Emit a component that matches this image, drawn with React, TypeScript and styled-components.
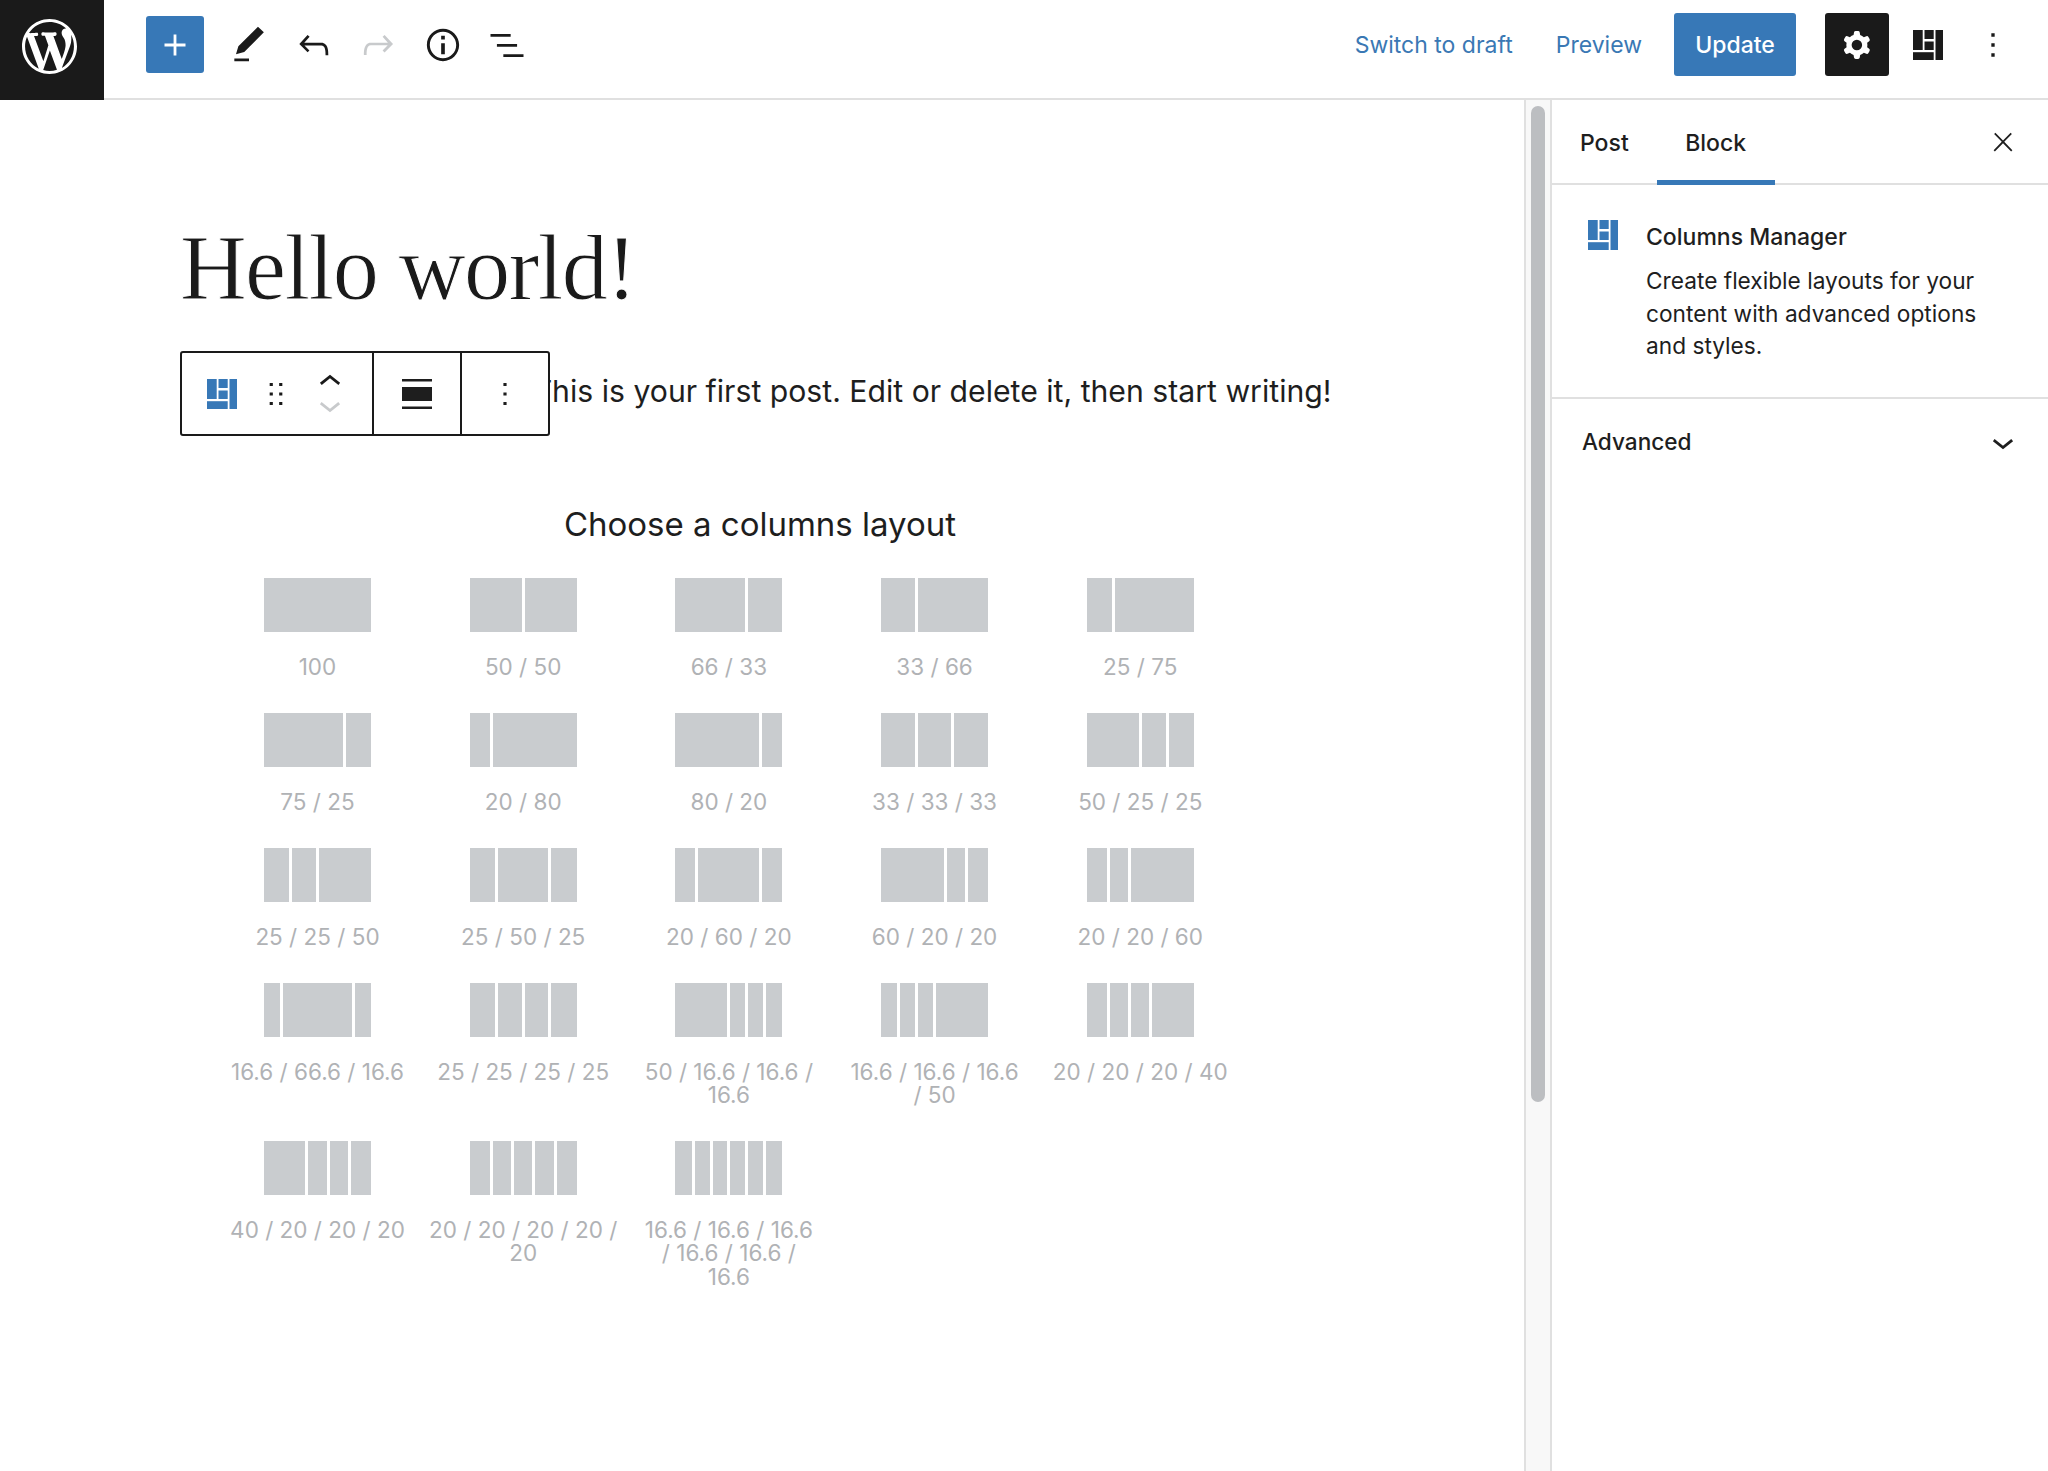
import React from "react";
import styled, { createGlobalStyle } from "styled-components";

const Global = createGlobalStyle`
  html, body { margin: 0; padding: 0; background: #fff; }
  body { font-family: Inter, "Noto Sans", "Liberation Sans", sans-serif; color: #1e1e1e; overflow: hidden; }
  * { box-sizing: border-box; }
`;

const Page = styled.div`
  width: 2048px;
  height: 1471px;
  display: flex;
  flex-direction: column;
  background: #fff;
  overflow: hidden;
`;

const Header = styled.header`
  flex: 0 0 100px;
  display: flex;
  align-items: flex-start;
  border-bottom: 2px solid #e0e0e0;
`;

const LogoBox = styled.div`
  width: 104px;
  height: 100px;
  margin-bottom: -2px;
  background: #1a1a1a;
  color: #fff;
  display: flex;
  align-items: center;
  justify-content: center;
  padding: 0 5px 7px 0;
`;

const ToolGroup = styled.div`
  display: flex;
  align-items: center;
  height: 89px;
  margin-left: 42px;
`;

const Inserter = styled.div`
  width: 58px;
  height: 57px;
  border-radius: 3px;
  background: #3778b7;
  color: #fff;
  display: flex;
  align-items: center;
  justify-content: center;
  margin-right: 13px;
`;

const ToolIcon = styled.div<{ $muted?: boolean }>`
  width: 64.5px;
  height: 57px;
  display: flex;
  align-items: center;
  justify-content: center;
  color: ${(p) => (p.$muted ? "#c8cacc" : "#1a1a1a")};
`;

const HeaderRight = styled.div`
  margin-left: auto;
  height: 89px;
  display: flex;
  align-items: center;
  padding-right: 23px;
`;

const LinkText = styled.span<{ $gap: number }>`
  font-size: 23px;
  color: #3a78b4;
  margin-right: ${(p) => p.$gap}px;
`;

const UpdateButton = styled.div`
  width: 122px;
  height: 63px;
  border-radius: 3px;
  background: #3778b7;
  color: #fff;
  font-size: 23px;
  font-weight: 500;
  display: flex;
  align-items: center;
  justify-content: center;
  margin-right: 29px;
`;

const SettingsButton = styled.div`
  width: 64px;
  height: 63px;
  border-radius: 3px;
  background: #1a1a1a;
  color: #fff;
  display: flex;
  align-items: center;
  justify-content: center;
  margin-right: 7px;
`;

const Body = styled.div`
  flex: 1;
  display: flex;
  min-height: 0;
`;

const Canvas = styled.main`
  flex: 0 0 1524px;
  padding: 116px 0 0 180px;
`;

const Title = styled.h1`
  margin: 0;
  font-family: "Liberation Serif", serif;
  font-weight: 400;
  font-size: 92.4px;
  line-height: 104px;
  color: #1a1a1a;
  letter-spacing: -1.6px;
  -webkit-text-stroke: 1px #fff;
`;

const ParagraphRow = styled.div`
  position: relative;
  margin-top: 31px;
  width: 1160px;
  height: 85px;
`;

const Paragraph = styled.p`
  margin: 0 0 0 3px;
  font-size: 30.2px;
  line-height: 80px;
  white-space: nowrap;
  color: #1e1e1e;
`;

const BlockToolbar = styled.div`
  position: absolute;
  left: 0;
  top: 0;
  width: 370px;
  height: 85px;
  display: flex;
  background: #fff;
  border: 2px solid #1a1a1a;
  border-radius: 3px;
`;

const ToolbarGroup = styled.div<{ $width: number; $inset?: number }>`
  width: ${(p) => p.$width}px;
  padding-left: ${(p) => p.$inset ?? 0}px;
  display: flex;
  align-items: center;
  justify-content: center;
  border-right: 2px solid #1a1a1a;
  &:last-child { border-right: none; }
`;

const BlockIcon = styled.div`
  color: #3778b7;
  display: flex;
  margin-right: 20.6px;
`;

const DragIcon = styled.div`
  color: #1a1a1a;
  display: flex;
  margin-right: 12.8px;
`;

const MoverStack = styled.div`
  display: flex;
  flex-direction: column;
  justify-content: center;
`;

const MoverIcon = styled.div<{ $muted?: boolean }>`
  height: 23px;
  color: ${(p) => (p.$muted ? "#c8cacc" : "#1a1a1a")};
  display: flex;
  align-items: center;
  justify-content: center;
`;

const Placeholder = styled.section`
  width: 1160px;
  margin-top: 66px;
`;

const PlaceholderTitle = styled.div`
  text-align: center;
  font-size: 33px;
  line-height: 44px;
  color: #1e1e1e;
`;

const LayoutGrid = styled.div`
  display: grid;
  grid-template-columns: repeat(5, 186px);
  column-gap: 19.7px;
  row-gap: 34.8px;
  margin: 32px 0 0 44.5px;
`;

const LayoutCell = styled.div`
  display: flex;
  flex-direction: column;
  align-items: center;
`;

const Preview = styled.div`
  width: 107px;
  height: 54px;
  display: flex;
  margin-bottom: 23px;
`;

const PreviewColumn = styled.div<{ $w: number }>`
  flex: 0 0 ${(p) => p.$w}%;
  padding: 0 1.5px;
  background: #c9cccf;
  background-clip: content-box;
  &:first-child { padding-left: 0; }
  &:last-child { padding-right: 0; }
`;

const LayoutLabel = styled.div`
  font-size: 22.5px;
  line-height: 23.2px;
  color: #b0b2b5;
  text-align: center;
  white-space: pre;
`;

const ScrollTrack = styled.div`
  flex: 0 0 28px;
  display: flex;
  justify-content: center;
  background: #f8f8f8;
  border-left: 2px solid #e0e0e0;
  border-right: 2px solid #e0e0e0;
  padding-top: 6px;
`;

const ScrollThumb = styled.div`
  width: 14px;
  height: 996px;
  border-radius: 7px;
  background: #bcbec1;
`;

const Sidebar = styled.aside`
  flex: 1;
  display: flex;
  flex-direction: column;
`;

const Tabs = styled.div`
  height: 85px;
  display: flex;
  align-items: stretch;
  border-bottom: 2px solid #e0e0e0;
  padding-left: 28px;
  padding-right: 30px;
`;

const Tab = styled.div<{ $active?: boolean }>`
  font-size: 23px;
  font-weight: 500;
  color: #1e1e1e;
  display: flex;
  align-items: center;
  padding: ${(p) => (p.$active ? "5px 28.5px 0" : "0 28px 0 0")};
  height: 85px;
  border-bottom: ${(p) => (p.$active ? "5px solid #3778b7" : "none")};
`;

const CloseWrap = styled.div`
  margin-left: auto;
  display: flex;
  align-items: center;
  height: 83px;
`;

const Card = styled.div`
  display: flex;
  height: 214px;
  padding: 36px 44px 0 36px;
  border-bottom: 2px solid #e0e0e0;
`;

const CardIcon = styled.div`
  width: 58px;
  flex: none;
  color: #3778b7;
  margin-top: -1px;
`;

const CardTitle = styled.div`
  font-size: 23px;
  line-height: 32px;
  font-weight: 500;
  color: #1e1e1e;
`;

const CardText = styled.div`
  margin-top: 12px;
  font-size: 22.7px;
  line-height: 32.6px;
  color: #1e1e1e;
`;

const PanelRow = styled.div`
  display: flex;
  align-items: center;
  justify-content: space-between;
  height: 85px;
  padding: 0 23px 0 30px;
  font-size: 22.6px;
  font-weight: 500;
`;

const Icon = ({ d, size = 44, evenodd }: { d: string; size?: number; evenodd?: boolean }) => (
  <svg width={size} height={size} viewBox="0 0 24 24" fill="currentColor">
    <path d={d} fillRule={evenodd ? "evenodd" : undefined} clipRule={evenodd ? "evenodd" : undefined} />
  </svg>
);

const WpLogo = () => (
  <svg width="55" height="55" viewBox="0 0 20 20" fill="currentColor">
    <path d="M20 10c0-5.51-4.49-10-10-10C4.48 0 0 4.49 0 10c0 5.52 4.48 10 10 10 5.51 0 10-4.48 10-10zM7.78 15.37L4.37 6.22c.55-.02 1.17-.08 1.17-.08.5-.06.44-1.13-.06-1.11 0 0-1.45.11-2.37.11-.18 0-.37 0-.58-.01C4.12 2.69 6.87 1.11 10 1.11c2.33 0 4.45.87 6.05 2.34-.68-.11-1.65.39-1.65 1.58 0 .74.45 1.36.9 2.1.35.61.55 1.36.55 2.46 0 1.49-1.4 5-1.4 5l-3.03-8.37c.54-.02.82-.17.82-.17.5-.05.44-1.25-.06-1.22 0 0-1.44.12-2.38.12-.87 0-2.33-.12-2.33-.12-.5-.03-.56 1.2-.06 1.22l.92.08 1.26 3.41zM17.41 10c.24-.64.74-1.87.43-4.25.7 1.29 1.05 2.71 1.05 4.25 0 3.29-1.73 6.24-4.4 7.78.97-2.59 1.94-5.2 2.92-7.78zM6.1 18.09C3.12 16.65 1.11 13.53 1.11 10c0-1.3.23-2.48.72-3.59C3.25 10.3 4.67 14.2 6.1 18.09zm4.03-6.63l2.58 6.98c-.86.29-1.76.45-2.71.45-.79 0-1.57-.11-2.29-.33.81-2.38 1.62-4.74 2.42-7.1z" />
  </svg>
);

const P = {
  plus: "M18 11.2h-5.2V6h-1.6v5.2H6v1.6h5.2V18h1.6v-5.2H18z",
  pen: "M20.1 5.1L16.9 2 6.2 12.7l-1.3 4.4 4.5-1.3L20.1 5.1zM4 20.8h8v-1.5H4v1.5z",
  undo: "M18.3 11.7c-.6-.6-1.4-.9-2.3-.9H6.7l2.9-3.3-1.1-1-4.5 5L8.5 16l1-1-2.7-2.7H16c.5 0 .9.2 1.3.5 1 1 1 3.4 1 4.5v.3h1.5v-.2c0-1.5 0-4.3-1.5-5.7z",
  redo: "M15.6 6.5l-1.1 1 2.9 3.3H8c-.9 0-1.7.3-2.3.9-1.4 1.5-1.4 4.2-1.4 5.6v.2h1.5v-.3c0-1.1 0-3.5 1-4.5.3-.3.7-.5 1.3-.5h9.2L14.5 15l1.1 1.1 4.6-4.6-4.6-5z",
  info: "M12 3.2c-4.8 0-8.8 3.9-8.8 8.8 0 4.8 3.9 8.8 8.8 8.8 4.8 0 8.8-3.9 8.8-8.8 0-4.8-4-8.8-8.8-8.8zm0 16c-4 0-7.2-3.3-7.2-7.2C4.8 8 8 4.8 12 4.8s7.2 3.3 7.2 7.2c0 4-3.2 7.2-7.2 7.2zM11 17h2v-6h-2v6zm0-8h2V7h-2v2z",
  list: "M3 6h11v1.5H3V6zm3.5 5.5h11V13h-11v-1.5zM21 17H10v1.5h11V17z",
  cog: "M10.289 4.836A1 1 0 0111.275 4h1.306a1 1 0 01.987.836l.244 1.466c.787.26 1.503.679 2.108 1.218l1.393-.522a1 1 0 011.216.437l.653 1.13a1 1 0 01-.23 1.273l-1.148.944a6.025 6.025 0 010 2.435l1.149.946a1 1 0 01.23 1.272l-.653 1.13a1 1 0 01-1.216.437l-1.394-.522c-.605.54-1.32.958-2.108 1.218l-.244 1.466a1 1 0 01-.987.836h-1.306a1 1 0 01-.986-.836l-.244-1.466a5.995 5.995 0 01-2.108-1.218l-1.394.522a1 1 0 01-1.217-.436l-.653-1.131a1 1 0 01.23-1.272l1.149-.946a6.026 6.026 0 010-2.435l-1.148-.944a1 1 0 01-.23-1.272l.653-1.131a1 1 0 011.217-.437l1.393.522a5.994 5.994 0 012.108-1.218l.244-1.466zM14.929 12a3 3 0 11-6 0 3 3 0 016 0z",
  more: "M13 19h-2v-2h2v2zm0-6h-2v-2h2v2zm0-6h-2V5h2v2z",
  close: "M13 11.8l6.1-6.3-1-1-6.1 6.2-6.1-6.2-1 1 6.1 6.3-6.5 6.7 1 1 6.5-6.6 6.5 6.6 1-1z",
  down: "M17.5 11.6L12 16l-5.5-4.4.9-1.2L12 14l4.5-3.6 1 1.2z",
  up: "M6.5 12.4L12 8l5.5 4.4-.9 1.2L12 10l-4.5 3.6-1-1.2z",
  drag: "M8 7h2V5H8v2zm0 6h2v-2H8v2zm0 6h2v-2H8v2zm6-14v2h2V5h-2zm0 8h2v-2h-2v2zm0 6h2v-2h-2v2z",
};

const ColumnsIcon = ({ size = 30 }: { size?: number }) => (
  <svg width={size} height={size} viewBox="0 0 30 30" fill="currentColor">
    <rect x="0" y="0" width="9.7" height="20" />
    <rect x="11.5" y="0" width="9.2" height="9" />
    <rect x="11.5" y="11.5" width="9.2" height="8.5" />
    <rect x="0" y="22.2" width="20.7" height="7.8" />
    <rect x="22.5" y="0" width="7.5" height="30" />
  </svg>
);

const AlignFull = () => (
  <svg width="30" height="30" viewBox="0 0 30 30" fill="currentColor">
    <rect x="0" y="0" width="30" height="2.5" />
    <rect x="0" y="8" width="30" height="14" />
    <rect x="0" y="27.5" width="30" height="2.5" />
  </svg>
);

const LAYOUTS: { cols: number[]; label: string }[] = [
  { cols: [100], label: "100" },
  { cols: [50, 50], label: "50 / 50" },
  { cols: [66, 33], label: "66 / 33" },
  { cols: [33, 66], label: "33 / 66" },
  { cols: [25, 75], label: "25 / 75" },
  { cols: [75, 25], label: "75 / 25" },
  { cols: [20, 80], label: "20 / 80" },
  { cols: [80, 20], label: "80 / 20" },
  { cols: [33, 33, 33], label: "33 / 33 / 33" },
  { cols: [50, 25, 25], label: "50 / 25 / 25" },
  { cols: [25, 25, 50], label: "25 / 25 / 50" },
  { cols: [25, 50, 25], label: "25 / 50 / 25" },
  { cols: [20, 60, 20], label: "20 / 60 / 20" },
  { cols: [60, 20, 20], label: "60 / 20 / 20" },
  { cols: [20, 20, 60], label: "20 / 20 / 60" },
  { cols: [16.6, 66.6, 16.6], label: "16.6 / 66.6 / 16.6" },
  { cols: [25, 25, 25, 25], label: "25 / 25 / 25 / 25" },
  { cols: [50, 16.6, 16.6, 16.6], label: "50 / 16.6 / 16.6 /\n16.6" },
  { cols: [16.6, 16.6, 16.6, 50], label: "16.6 / 16.6 / 16.6\n/ 50" },
  { cols: [20, 20, 20, 40], label: "20 / 20 / 20 / 40" },
  { cols: [40, 20, 20, 20], label: "40 / 20 / 20 / 20" },
  { cols: [20, 20, 20, 20, 20], label: "20 / 20 / 20 / 20 /\n20" },
  { cols: [16.6, 16.6, 16.6, 16.6, 16.6, 16.6], label: "16.6 / 16.6 / 16.6\n/ 16.6 / 16.6 /\n16.6" },
];

export default function App() {
  return (
    <Page>
      <Global />
      <Header>
        <LogoBox><WpLogo /></LogoBox>
        <ToolGroup>
          <Inserter><Icon d={P.plus} size={42} /></Inserter>
          <ToolIcon><Icon d={P.pen} /></ToolIcon>
          <ToolIcon><Icon d={P.undo} /></ToolIcon>
          <ToolIcon $muted><Icon d={P.redo} /></ToolIcon>
          <ToolIcon><Icon d={P.info} /></ToolIcon>
          <ToolIcon><Icon d={P.list} /></ToolIcon>
        </ToolGroup>
        <HeaderRight>
          <LinkText $gap={43}>Switch to draft</LinkText>
          <LinkText $gap={32}>Preview</LinkText>
          <UpdateButton>Update</UpdateButton>
          <SettingsButton><Icon d={P.cog} size={42} evenodd /></SettingsButton>
          <ToolIcon><ColumnsIcon /></ToolIcon>
          <ToolIcon><Icon d={P.more} size={40} /></ToolIcon>
        </HeaderRight>
      </Header>
      <Body>
        <Canvas>
          <Title>Hello world!</Title>
          <ParagraphRow>
            <Paragraph>Welcome to WordPress. This is your first post. Edit or delete it, then start writing!</Paragraph>
            <BlockToolbar>
              <ToolbarGroup $width={192} $inset={5}>
                <BlockIcon><ColumnsIcon /></BlockIcon>
                <DragIcon><Icon d={P.drag} size={38} /></DragIcon>
                <MoverStack>
                  <MoverIcon><Icon d={P.up} size={44} /></MoverIcon>
                  <MoverIcon $muted><Icon d={P.down} size={44} /></MoverIcon>
                </MoverStack>
              </ToolbarGroup>
              <ToolbarGroup $width={88}><AlignFull /></ToolbarGroup>
              <ToolbarGroup $width={86}><Icon d={P.more} size={38} /></ToolbarGroup>
            </BlockToolbar>
          </ParagraphRow>
          <Placeholder>
            <PlaceholderTitle>Choose a columns layout</PlaceholderTitle>
            <LayoutGrid>
              {LAYOUTS.map(({ cols, label }) => {
                const sum = cols.reduce((a, b) => a + b, 0);
                return (
                  <LayoutCell key={label}>
                    <Preview>
                      {cols.map((c, j) => (
                        <PreviewColumn key={j} $w={(c / sum) * 100} />
                      ))}
                    </Preview>
                    <LayoutLabel>{label}</LayoutLabel>
                  </LayoutCell>
                );
              })}
            </LayoutGrid>
          </Placeholder>
        </Canvas>
        <ScrollTrack><ScrollThumb /></ScrollTrack>
        <Sidebar>
          <Tabs>
            <Tab>Post</Tab>
            <Tab $active>Block</Tab>
            <CloseWrap><Icon d={P.close} size={30} /></CloseWrap>
          </Tabs>
          <Card>
            <CardIcon><ColumnsIcon /></CardIcon>
            <div>
              <CardTitle>Columns Manager</CardTitle>
              <CardText>Create flexible layouts for your content with advanced options and styles.</CardText>
            </div>
          </Card>
          <PanelRow>
            Advanced
            <Icon d={P.down} size={44} />
          </PanelRow>
        </Sidebar>
      </Body>
    </Page>
  );
}
